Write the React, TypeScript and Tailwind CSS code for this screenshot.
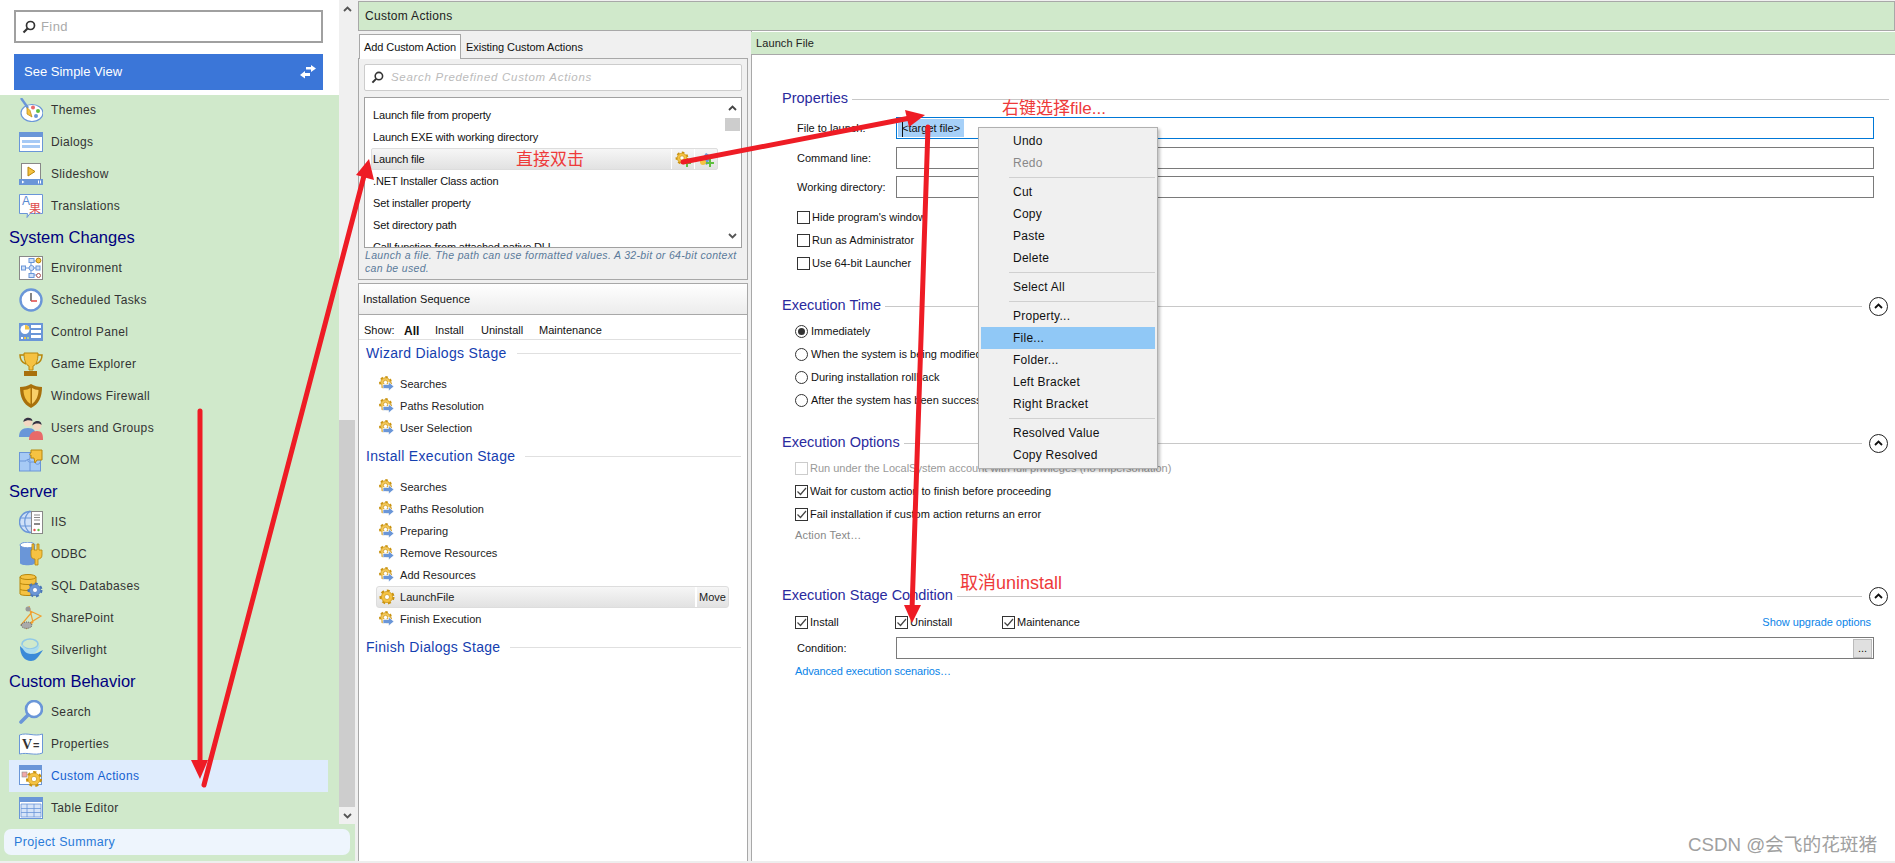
import React from "react";

const Gear = ({ cx = 12, cy = 12, r = 6, fill = "#f5c242", stroke = "#c9920f" }: any) => (
  <g>
    <circle cx={cx} cy={cy} r={r * 0.92} fill="none" stroke={stroke} strokeWidth={r * 0.3} strokeDasharray={`${r * 0.42} ${r * 0.42}`} />
    <circle cx={cx} cy={cy} r={r * 0.8} fill={fill} stroke={stroke} strokeWidth="0.7" />
    <circle cx={cx} cy={cy} r={r * 0.36} fill="#fff" stroke={stroke} strokeWidth="0.7" />
  </g>
);

const GearArrow = () => (
  <svg width="16" height="16" viewBox="0 0 16 16" className="shrink-0">
    <Gear cx={6.5} cy={6.5} r={6} fill="#f3c75a" />
    <path d="M4 8.500h5.500V6L15 10.500 9.500 15v-2.500H4z" fill="#6a96d8" stroke="#fff" strokeWidth="0.7" />
  </svg>
);

const Glass = ({ s = 14 }: any) => (
  <svg width={s} height={s} viewBox="0 0 14 14" className="shrink-0">
    <circle cx="8.500" cy="5.500" r="4" fill="none" stroke="#333" strokeWidth="1.700" />
    <path d="M5.500 8.500 1.500 12.500" stroke="#333" strokeWidth="2.200" />
  </svg>
);

const Up = ({ c = "#555" }: any) => (
  <svg width="9" height="6" viewBox="0 0 9 6" className="shrink-0"><path d="M1 5 4.500 1.500 8 5" fill="none" stroke={c} strokeWidth="1.800" /></svg>
);
const Down = ({ c = "#555" }: any) => (
  <svg width="9" height="6" viewBox="0 0 9 6" className="shrink-0"><path d="M1 1 4.500 4.500 8 1" fill="none" stroke={c} strokeWidth="1.800" /></svg>
);

const B = "#6a96d8";
const Y = "#f5c242";
const O = "#b8860b";

const icons: Record<string, React.ReactNode> = {
  Themes: (
    <>
      <ellipse cx="13" cy="15" rx="11" ry="8.500" fill="#fff" stroke={B} strokeWidth="1.200" />
      <circle cx="14" cy="9.500" r="2" fill="#e86a6a" /><circle cx="19" cy="13" r="2" fill="#5fbf3f" /><circle cx="17" cy="18" r="2" fill={B} />
      <path d="M2 0 9 10" stroke={B} strokeWidth="2.400" />
      <path d="M8 9.500 11 12.500 13 19 8 16z" fill={Y} stroke={O} strokeWidth="0.700" />
    </>
  ),
  Dialogs: (
    <>
      <rect x="0.500" y="2.500" width="23" height="19" fill="#fff" stroke={B} />
      <rect x="0" y="2" width="24" height="5" fill={B} />
      <rect x="3" y="10" width="18" height="3" fill="#a6caf5" /><rect x="3" y="15" width="18" height="3" fill="#a6caf5" />
    </>
  ),
  Slideshow: (
    <>
      <rect x="2.500" y="1.500" width="19" height="19" fill="#fff" stroke="#888" />
      <path d="M9 5v9l7-4.500z" fill={Y} stroke={O} />
      <rect x="0" y="17" width="24" height="6" fill={B} />
      <path d="M3 18.500v3l2.500-1.500z" fill="#fff" /><rect x="19" y="18.500" width="1" height="3" fill="#fff" /><rect x="21" y="18.500" width="1" height="3" fill="#fff" />
    </>
  ),
  Translations: (
    <>
      <path d="M.5.5h23v19H11l-3 4 .5-4H.5z" fill="#fff" stroke={B} />
      <text x="3" y="11" fontSize="12" fill="#5a8ad0" fontFamily="'Liberation Sans'">A</text>
      <text x="10" y="19" fontSize="12" fill="#e05050" fontFamily="'Noto Sans CJK SC'">果</text>
    </>
  ),
  Environment: (
    <>
      <rect x="0.500" y="0.500" width="23" height="23" fill="#fff" stroke="#888" />
      <path d="M12 5v14M5 12h14M12 5h6M12 19h6" stroke={B} fill="none" />
      <rect x="10" y="2.500" width="5" height="4" fill="#cfe0f8" stroke={B} /><rect x="2.500" y="10" width="4" height="4" fill="#cfe0f8" stroke={B} />
      <circle cx="12.500" cy="12" r="2.500" fill="#cfe0f8" stroke={B} /><rect x="17" y="10" width="4" height="4" fill="#cfe0f8" stroke={B} />
      <rect x="10" y="17.500" width="5" height="4" fill="#cfe0f8" stroke={B} />
      <circle cx="19.500" cy="4.500" r="2.400" fill={Y} stroke={O} /><circle cx="19.500" cy="19.500" r="2" fill="#fff" stroke="#a55" />
    </>
  ),
  "Scheduled Tasks": (
    <>
      <circle cx="12" cy="12" r="10.500" fill="#fff" stroke={B} strokeWidth="2.400" />
      <path d="M12 5v8" stroke="#666" strokeWidth="1.600" /><path d="M12 13h6" stroke="#e05050" strokeWidth="1.600" />
    </>
  ),
  "Control Panel": (
    <>
      <rect x="0" y="3" width="24" height="18" fill={B} />
      <circle cx="6" cy="9.500" r="4.500" fill="#fff" /><path d="M6 9.500V5A4.500 4.500 0 0 1 10.500 9.500z" fill={Y} />
      <rect x="12" y="5" width="10" height="3" fill="#fff" /><rect x="12" y="10" width="10" height="3" fill="#fff" /><rect x="12" y="15" width="10" height="3" fill="#fff" />
      <rect x="2" y="17" width="2" height="2" fill="#fff" /><rect x="5" y="17" width="2" height="2" fill={Y} /><rect x="8" y="17" width="2" height="2" fill="#a6d8a0" />
    </>
  ),
  "Game Explorer": (
    <>
      <path d="M5 3H1c0 5 3 8 6 9M19 3h4c0 5-3 8-6 9" fill="none" stroke={O} strokeWidth="1.500" />
      <path d="M5 1h14c0 8-2 12-5 13v4h-4v-4C7 13 5 9 5 1z" fill={Y} stroke={O} />
      <rect x="5" y="19" width="13" height="5" fill="#a8700c" />
    </>
  ),
  "Windows Firewall": (
    <>
      <path d="M12 0c3 2 7 3 11 3 0 10-3 17-11 21C4 20 1 13 1 3c4 0 8-1 11-3z" fill="#a8700c" />
      <path d="M11.500 4v16C7 17 4.500 12 4.500 6c3 0 5-1 7-2z" fill={Y} />
      <path d="M13 4c2 1 4.500 2 6.500 2 0 6-2.500 11-6.500 14z" fill="#f8cf6a" />
    </>
  ),
  "Users and Groups": (
    <>
      <circle cx="9" cy="6" r="4.500" fill="#f3d7c2" /><path d="M4.500 6C4 1 13 0 13.500 5 11 4 7 4 4.500 6z" fill="#334" />
      <path d="M0 21c0-6 3-9 9-9s8 3 8 9z" fill={B} />
      <circle cx="18" cy="9.500" r="4.500" fill="#f3d7c2" /><path d="M13.500 9.500C13 4 23 3 22.500 9 20 7 16 7 13.500 9.500z" fill="#334" />
      <path d="M10 24c0-6 3-9 8-9s6 3 6 9z" fill="#e86a6a" />
    </>
  ),
  COM: (
    <>
      <rect x="0.500" y="4.500" width="21" height="18.500" fill="#a6caf5" stroke={B} />
      <path d="M11 5v6c-3 0-3 3 0 3v9M1 13h6c0-2 4-2 4 0M11 14h5c0 3 5 3 5 0" fill="none" stroke={B} />
      <path d="M12 2h11v10h-5l-2 3-1-5h-3V7c-1 1-2-1 0-2z" fill={Y} stroke={O} />
    </>
  ),
  IIS: (
    <>
      <circle cx="11" cy="12" r="10.500" fill="#cfe0f8" stroke={B} strokeWidth="1.400" />
      <path d="M1 8h20M1 16h20M11 1c-7 6-7 16 0 22" fill="none" stroke={B} strokeWidth="1.200" />
      <rect x="12.500" y="1.500" width="11" height="22" fill="#fff" stroke="#888" />
      <path d="M15 5h6M15 7.500h6M15 10h6" stroke="#888" /><rect x="15" y="13" width="6" height="2" fill="#888" />
      <circle cx="15.500" cy="20" r="1.200" fill="#e05050" /><circle cx="19.500" cy="20" r="1.200" fill="#5fbf3f" />
    </>
  ),
  ODBC: (
    <>
      <path d="M1 3v18c0 3 15 3 15 0V3z" fill={B} /><ellipse cx="8.500" cy="3" rx="7.500" ry="2.800" fill="#fff" stroke={B} />
      <path d="M13 8V2h2v6h3V2h2v6h3v5c0 3-2 4-4 4v6h-3v-6c-2 0-4-1-4-4V8z" fill={Y} stroke={O} strokeWidth="0.800" />
    </>
  ),
  "SQL Databases": (
    <>
      <path d="M1 3v17c0 2 16 2 16 0V3z" fill={Y} stroke={O} /><ellipse cx="9" cy="3" rx="8" ry="2.500" fill={Y} stroke={O} />
      <path d="M1 9c0 2 16 2 16 0M1 15c0 2 16 2 16 0" fill="none" stroke={O} />
      <Gear cx={16} cy={16} r={7} fill={B} stroke="#4a76b8" />
    </>
  ),
  SharePoint: (
    <>
      <path d="M7 3 22 10 6 20M10 0 14 16 7 23M2 19 13 6" fill="none" stroke="#f0a030" strokeWidth="1.200" />
      <path d="M2 19c2-4 10-4 11 0 0 4-10 5-11 0z" fill="#aaa" stroke="#666" strokeDasharray="1 1" />
      <circle cx="9" cy="3" r="2.500" fill="#999" />
    </>
  ),
  Silverlight: (
    <>
      <ellipse cx="11" cy="6" rx="8" ry="5" fill="none" stroke="#8fc8e8" strokeWidth="1.600" />
      <path d="M1 8c0 10 5 15 11 15 4 0 7-3 12-11-6 3-8 5-12 3-3 0-7-3-11-7z" fill="#3a8ad8" />
      <path d="M3 6c2 4 5 6 9 5 4 0 7-2 9-4-2 6-5 9-9 9-5 0-9-4-9-10z" fill="#aadcf0" />
    </>
  ),
  Search: (
    <>
      <circle cx="15" cy="9" r="8" fill="#fff" stroke={B} strokeWidth="2.600" />
      <path d="M9 15 2 22" stroke={B} strokeWidth="3.600" strokeLinecap="round" />
    </>
  ),
  Properties: (
    <>
      <path d="M.5 3c8-3 15 2 23-1v19c-8 3-15-1-23 1z" fill="#fff" stroke={B} />
      <text x="3" y="17" fontSize="14" fontWeight="bold" fill="#333" fontFamily="'Liberation Serif'">V</text>
      <text x="14" y="17" fontSize="11" fontWeight="bold" fill="#333" fontFamily="'Liberation Sans'">=</text>
    </>
  ),
  "Custom Actions": (
    <>
      <rect x="0.500" y="1.500" width="22" height="19" fill="#fff" stroke={B} />
      <rect x="0" y="1" width="23" height="5" fill={B} />
      <rect x="3" y="8" width="5" height="5" fill="#f0a8a8" stroke="#888" strokeWidth="0.600" />
      <Gear cx={15} cy={15} r={7.500} />
    </>
  ),
  "Table Editor": (
    <>
      <rect x="0.500" y="1.500" width="23" height="21" fill="#fff" stroke={B} />
      <rect x="0" y="1" width="24" height="5" fill={B} />
      <path d="M2 8h20v13H2zM2 12.500h20M2 16.500h20M8 8v13M15 8v13" fill="#d6e4f8" stroke={B} strokeWidth="0.800" />
    </>
  ),
};

const NavItem = ({ label, active }: { label: string; active?: boolean }) => (
  <div className={`h-8 w-[319px] ml-[9px] flex items-center pl-[10px] gap-2 ${active ? "bg-[#dfecfd] text-[#1560d0]" : "text-[#333]"}`}>
    <svg width="24" height="24" viewBox="0 0 24 24" className="shrink-0">{icons[label]}</svg>
    <span className="text-[12px] tracking-[0.35px]">{label}</span>
  </div>
);

const NavHead = ({ children }: any) => (
  <div className="h-[30px] flex items-center pl-[9px] text-[16.5px] text-[#00007f]">{children}</div>
);

const SeqHead = ({ title, mt }: any) => (
  <div className={`h-5 flex items-center pl-[7px] pr-[6px] gap-[10px] ${mt}`}>
    <span className="text-[14px] text-[#1540b0] tracking-[0.3px] whitespace-nowrap">{title}</span>
    <div className="h-px flex-1 bg-[#e0e0e0]" />
  </div>
);

const SeqRow = ({ label }: any) => (
  <div className="h-[22px] flex items-center pl-[20px] gap-[5px] text-[11px] text-[#222] tracking-[0.05px]">
    <GearArrow /><span>{label}</span>
  </div>
);

const Box = ({ checked, disabled }: any) => (
  <span className={`w-[13px] h-[13px] border bg-white shrink-0 flex items-center justify-center ${disabled ? "border-[#ccc]" : "border-[#333]"}`}>
    {checked && (
      <svg width="11" height="11" viewBox="0 0 11 11"><path d="M1.500 5.500 4.500 8.500 10 2" fill="none" stroke="#444" strokeWidth="1.200" /></svg>
    )}
  </span>
);

const Check = ({ label, checked, disabled, className = "" }: any) => (
  <div className={`h-[23px] flex items-center gap-[2px] text-[11px] whitespace-nowrap ${disabled ? "text-[#999]" : "text-[#111]"} ${className}`}>
    <Box checked={checked} disabled={disabled} /><span>{label}</span>
  </div>
);

const Radio = ({ label, on }: any) => (
  <div className="h-[23px] flex items-center gap-[3px] text-[11px] text-[#111] whitespace-nowrap">
    <span className="w-[13px] h-[13px] rounded-full border border-[#333] bg-white flex items-center justify-center shrink-0">
      {on && <span className="w-[7px] h-[7px] rounded-full bg-[#333]" />}
    </span>
    <span>{label}</span>
  </div>
);

const SecHead = ({ title, mt, collapse }: any) => (
  <div className={`h-5 flex items-center gap-[4px] ${mt} pl-[30px] pr-[6px]`}>
    <span className="text-[14.5px] text-[#2a2a9e] whitespace-nowrap">{title}</span>
    <div className="h-px flex-1 bg-[#c8c8c8]" />
    {collapse && (
      <span className="w-[19px] h-[19px] rounded-full border border-[#222] bg-white flex items-center justify-center ml-[3px] mr-px">
        <Up c="#111" />
      </span>
    )}
  </div>
);

const FieldRow = ({ label, mt, children, focus }: any) => (
  <div className={`flex items-center h-[22px] ${mt} pl-[45px] pr-[21px] text-[11px] text-[#111]`}>
    <span className="w-[99px] shrink-0">{label}</span>
    <div className={`flex-1 h-full bg-white border flex items-center ${focus ? "border-[#0078d7]" : "border-[#7a7a7a]"}`}>{children}</div>
  </div>
);

const MenuItem = ({ label, disabled, active }: any) => (
  <div className={`h-[22px] mx-[2px] pl-[32px] flex items-center text-[12px] tracking-[0.25px] ${disabled ? "text-[#888]" : "text-[#111]"} ${active ? "bg-[#90c8f6]" : ""}`}>{label}</div>
);
const MenuSep = () => <div className="ml-[30px] mr-[2px] h-px bg-[#d0d0d0] my-[3px]" />;

const Note = ({ children, className }: any) => (
  <div className={`absolute text-[#ee3a3a] leading-5 whitespace-nowrap ${className}`}>{children}</div>
);

export default function App() {
  return (
    <div className="relative w-[1895px] h-[863px] overflow-hidden flex bg-[#f0f0f0] font-[family-name:'Liberation_Sans','Noto_Sans_CJK_SC',sans-serif]">
      {/* Sidebar */}
      <div className="w-[355px] shrink-0 flex flex-col h-[861px]">
        <div className="h-[824px] flex">
          <div className="w-[339px] flex flex-col">
            <div className="h-[95px] bg-white pt-[10px] pl-[14px]">
              <div className="w-[309px] h-[33px] border-2 border-[#a0a0a0] flex items-center pl-[6px] gap-[5px]">
                <Glass /><span className="text-[13px] text-[#aaa] tracking-[0.4px]">Find</span>
              </div>
              <div className="w-[309px] h-9 mt-[11px] bg-[#3b76d8] text-white flex items-center justify-between pl-[10px] pr-[7px] text-[13px]">
                <span>See Simple View</span>
                <svg width="16" height="16" viewBox="0 0 16 16"><path d="M6 3h5V1l5 3.500L11 8V5.500H6zM10 9H5V7L0 11l5 3.500V12h5z" fill="#fff" /></svg>
              </div>
            </div>
            <div className="flex-1 bg-[#d0e9cb] overflow-hidden">
              <div className="-mt-px">
                {["Themes", "Dialogs", "Slideshow", "Translations"].map((l) => <NavItem key={l} label={l} />)}
                <NavHead>System Changes</NavHead>
                {["Environment", "Scheduled Tasks", "Control Panel", "Game Explorer", "Windows Firewall", "Users and Groups", "COM"].map((l) => <NavItem key={l} label={l} />)}
                <NavHead>Server</NavHead>
                {["IIS", "ODBC", "SQL Databases", "SharePoint", "Silverlight"].map((l) => <NavItem key={l} label={l} />)}
                <NavHead>Custom Behavior</NavHead>
                <NavItem label="Search" />
                <NavItem label="Properties" />
                <NavItem label="Custom Actions" active />
                <NavItem label="Table Editor" />
              </div>
            </div>
          </div>
          <div className="w-4 flex flex-col bg-[#f0f0f0]">
            <div className="h-[420px] pt-[6px] flex justify-center items-start"><Up /></div>
            <div className="h-[387px] bg-[#cdcdcd]" />
            <div className="flex-1 flex justify-center items-center"><Down /></div>
          </div>
        </div>
        <div className="flex-1 bg-[#d0e9cb] pt-[5px] pl-1 pr-[5px]">
          <div className="h-[26px] rounded-[7px] bg-[#eef5fd] flex items-center pl-[10px] text-[12.5px] tracking-[0.35px] text-[#2a7ad8]">Project Summary</div>
        </div>
      </div>

      {/* Main */}
      <div className="flex-1 flex flex-col h-[861px] pl-[3px] pt-px">
        <div className="h-[30px] bg-[#d0e9cb] border border-[#a8a8a8] flex items-center pl-[6px] text-[12px] tracking-[0.3px] text-[#222]">Custom Actions</div>
        <div className="flex-1 flex">
          {/* Middle */}
          <div className="w-[390px] shrink-0 flex flex-col">
            <div className="h-[249px] flex flex-col pt-[3px]">
              <div className="flex h-[25px] pl-px text-[11px] text-[#111]">
                <div className="w-[102px] h-[25px] bg-white border border-b-0 border-[#a8a8a8] flex items-center justify-center relative z-10 tracking-[-0.1px]">Add Custom Action</div>
                <div className="flex items-center pl-[5px] pt-[2px] tracking-[-0.05px]">Existing Custom Actions</div>
              </div>
              <div className="h-[222px] -mt-px border border-[#a8a8a8] px-[5px] pt-[5px]">
                <div className="h-[27px] bg-white border border-[#ccc] rounded-[2px] flex items-center pl-[6px] gap-[7px]">
                  <Glass s={13} /><span className="text-[11.5px] italic text-[#bbb] tracking-[0.7px]">Search Predefined Custom Actions</span>
                </div>
                <div className="h-[151px] mt-[6px] bg-white border border-[#a0a0a0] overflow-hidden flex">
                  <div className="flex-1 pt-[6px] pl-[6px] pr-[5px] text-[11px] text-[#111] tracking-[-0.15px]">
                    <div className="h-[22px] flex items-center pl-[2px]">Launch file from property</div>
                    <div className="h-[22px] flex items-center pl-[2px]">Launch EXE with working directory</div>
                    <div className="h-[22px] flex items-stretch rounded-[2px] border border-[#ddd] bg-gradient-to-b from-[#f6f6f6] to-[#e2e2e2]">
                      <span className="flex-1 flex items-center pl-[1px]">Launch file</span>
                      <span className="w-[23px] border-l border-white flex items-center justify-center">
                        <svg width="16" height="16" viewBox="0 0 16 16"><Gear cx={7} cy={7} r={6} /><path d="M11 8v3H8v2h3v3h2v-3h3v-2h-3V8z" fill="#5fbf3f" /></svg>
                      </span>
                      <span className="w-[23px] border-l border-white flex items-center justify-center">
                        <svg width="16" height="16" viewBox="0 0 16 16"><path d="M2 10 8 2l5 3-4 9z" fill="#6a96d8" /><circle cx="5" cy="11" r="3" fill={Y} /><path d="M11 8v3H8v2h3v3h2v-3h3v-2h-3V8z" fill="#5fbf3f" /></svg>
                      </span>
                    </div>
                    <div className="h-[22px] flex items-center pl-[2px]">.NET Installer Class action</div>
                    <div className="h-[22px] flex items-center pl-[2px]">Set installer property</div>
                    <div className="h-[22px] flex items-center pl-[2px]">Set directory path</div>
                    <div className="h-[22px] flex items-center pl-[2px] whitespace-nowrap">Call function from attached native DLL</div>
                  </div>
                  <div className="w-[18px] shrink-0 flex flex-col items-center pt-[7px] pb-[8px]">
                    <Up c="#444" />
                    <div className="mt-[7px] w-[15px] h-[13px] bg-[#cdcdcd]" />
                    <div className="flex-1" />
                    <Down />
                  </div>
                </div>
                <div className="text-[10.5px] italic leading-[13px] text-[#5a7a9a] mt-[1px] pl-[1px] tracking-[0.33px]">Launch a file. The path can use formatted values. A 32-bit or 64-bit context can be used.</div>
              </div>
            </div>
            <div className="flex-1 mt-[3px] border border-[#a8a8a8] border-b-0 bg-white">
              <div className="h-[31px] bg-gradient-to-b from-white to-[#ececec] border-b border-[#a8a8a8] flex items-center pl-[4px] text-[11px] text-[#111] tracking-[0.1px]">Installation Sequence</div>
              <div className="h-[25px] border-b border-[#e0e0e0] flex items-center pt-[7px] pl-[5px] text-[11px] text-[#111]">
                <span className="w-[40px]">Show:</span><b className="text-[12px] w-[31px]">All</b>
                <span className="w-[46px]">Install</span><span className="w-[58px]">Uninstall</span><span>Maintenance</span>
              </div>
              <SeqHead title="Wizard Dialogs Stage" mt="mt-[3px]" />
              <div className="mt-[10px]">
                {["Searches", "Paths Resolution", "User Selection"].map((l) => <SeqRow key={l} label={l} />)}
              </div>
              <SeqHead title="Install Execution Stage" mt="mt-[7px]" />
              <div className="mt-[10px]">
                {["Searches", "Paths Resolution", "Preparing", "Remove Resources", "Add Resources"].map((l, i) => <SeqRow key={i} label={l} />)}
                <div className="h-[22px] ml-[17px] mr-[18px] flex items-stretch rounded-[3px] border border-[#ddd] bg-gradient-to-b from-[#f6f6f6] to-[#e2e2e2] text-[11px] tracking-[0.05px] text-[#222]">
                  <span className="flex-1 flex items-center pl-[2px] gap-[5px]">
                    <svg width="16" height="16" viewBox="0 0 16 16"><Gear cx={8} cy={8} r={7} /></svg>LaunchFile
                  </span>
                  <span className="w-[33px] border-l-2 border-white flex items-center justify-center">Move</span>
                </div>
                <SeqRow label="Finish Execution" />
              </div>
              <SeqHead title="Finish Dialogs Stage" mt="mt-[7px]" />
            </div>
          </div>

          {/* Right */}
          <div className="flex-1 ml-[3px] border-l border-[#a8a8a8] bg-white flex flex-col">
            <div className="h-[23px] bg-[#d0e9cb] border-b border-[#a8a8a8] mt-px flex items-center pl-[5px] text-[11px] text-[#222] tracking-[0.1px] -ml-px">Launch File</div>
            <SecHead title="Properties" mt="mt-[34px]" />
            <FieldRow label="File to launch:" mt="mt-[8px]" focus>
              <span className="ml-px relative h-[18px] flex items-center bg-[#a6d0f8] px-[4px] text-[11px]">
                <span className="absolute left-[4px] top-0 bottom-0 w-px bg-[#111]" />&lt;target file&gt;
              </span>
            </FieldRow>
            <FieldRow label="Command line:" mt="mt-[8px]" />
            <FieldRow label="Working directory:" mt="mt-[7px]" />
            <div className="pl-[45px] mt-[8px]">
              <Check label="Hide program's window" />
              <Check label="Run as Administrator" />
              <Check label="Use 64-bit Launcher" />
            </div>
            <SecHead title="Execution Time" mt="mt-[21px]" collapse />
            <div className="pl-[43px] mt-[4px]">
              <Radio label="Immediately" on />
              <Radio label="When the system is being modified (deferred)" />
              <Radio label="During installation rollback" />
              <Radio label="After the system has been successfully modified" />
            </div>
            <SecHead title="Execution Options" mt="mt-[21px]" collapse />
            <div className="pl-[43px] mt-[4px]">
              <Check disabled label="Run under the LocalSystem account with full privileges (no impersonation)" />
              <Check checked label="Wait for custom action to finish before proceeding" />
              <Check checked label="Fail installation if custom action returns an error" />
              <div className="h-[18px] flex items-center text-[11px] tracking-[0.15px] text-[#888]">Action Text…</div>
            </div>
            <SecHead title="Execution Stage Condition" mt="mt-[42px]" collapse />
            <div className="flex items-center h-[23px] mt-[5px] pl-[43px] pr-[24px]">
              <Check checked label="Install" className="w-[100px]" />
              <Check checked label="Uninstall" className="w-[107px]" />
              <Check checked label="Maintenance" className="flex-1" />
              <span className="text-[11px] text-[#0a84e8] tracking-[-0.04px]">Show upgrade options</span>
            </div>
            <FieldRow label="Condition:" mt="mt-[3px]">
              <span className="ml-auto mr-px w-[19px] h-[19px] bg-[#e0e0e0] border border-[#bbb] flex items-center justify-center text-[11px] text-[#111]">...</span>
            </FieldRow>
            <div className="pl-[43px] mt-[4px] text-[11px] text-[#0a84e8] tracking-[-0.15px]">Advanced execution scenarios…</div>
          </div>
        </div>
      </div>

      <div className="absolute left-0 right-0 bottom-0 h-[2px] bg-[#eeeeee]" />

      {/* Context menu */}
      <div className="absolute left-[978px] top-[127px] w-[180px] h-[342px] bg-[#f0f0f0] border border-[#b0b0b0] pt-[2px] shadow-[2px_2px_3px_rgba(0,0,0,0.25)]">
        <MenuItem label="Undo" /><MenuItem label="Redo" disabled />
        <MenuSep />
        <MenuItem label="Cut" /><MenuItem label="Copy" /><MenuItem label="Paste" /><MenuItem label="Delete" />
        <MenuSep />
        <MenuItem label="Select All" />
        <MenuSep />
        <MenuItem label="Property..." /><MenuItem label="File..." active /><MenuItem label="Folder..." /><MenuItem label="Left Bracket" /><MenuItem label="Right Bracket" />
        <MenuSep />
        <MenuItem label="Resolved Value" /><MenuItem label="Copy Resolved" />
      </div>

      {/* Annotations */}
      <svg className="absolute left-0 top-0 pointer-events-none" width="1895" height="863" viewBox="0 0 1895 863">
        <g stroke="#ee1c25" strokeLinecap="round" fill="none">
          <path d="M200 411V768" strokeWidth="5" />
          <path d="M204 785 365 172" strokeWidth="5" />
          <path d="M683 162 910 118" strokeWidth="5" />
          <path d="M928 127 912 610" strokeWidth="5" />
        </g>
        <g fill="#ee1c25">
          <path d="M191 760H208L200 779z" />
          <path d="M369 159 374 180 356 175z" />
          <path d="M925 115 905 110 909 127z" />
          <path d="M912 623 904 605H921z" />
        </g>
      </svg>
      <Note className="left-[516px] top-[150px] text-[17px]">直接双击</Note>
      <Note className="left-[1002px] top-[99px] text-[17px]">右键选择file...</Note>
      <Note className="left-[960px] top-[573px] text-[18px]">取消uninstall</Note>
      <div className="absolute left-[1688px] top-[835px] text-[18.7px] leading-5 text-[#a0a0a0] whitespace-nowrap">CSDN @会飞的花斑猪</div>
    </div>
  );
}
